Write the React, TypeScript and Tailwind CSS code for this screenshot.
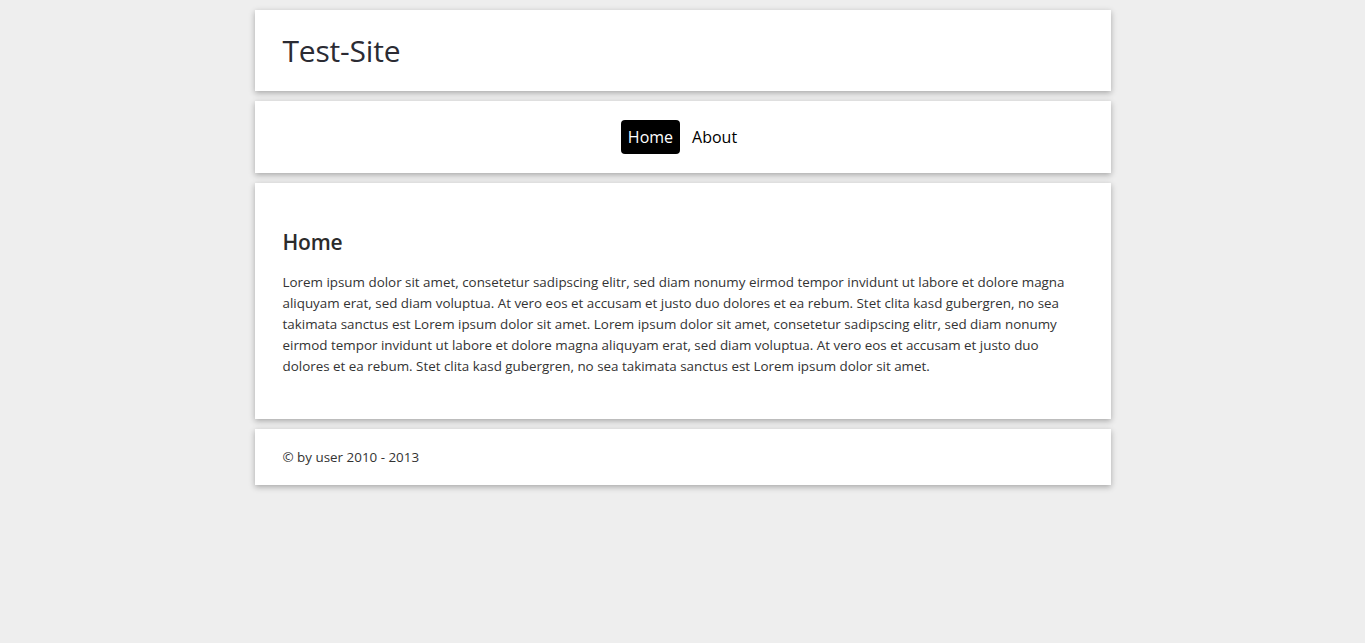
const Box = ({ className = '', children }: { className?: string; children: React.ReactNode }) => (
    <div className={`bg-white shadow-[0_2px_6px_rgba(0,0,0,0.3)] ${className}`}>{children}</div>
);

const App = () => {
    return (
        <div className="min-h-screen bg-[#eeeeee] pt-[10px] text-[#333333]" style={{ fontFamily: '"Open Sans", "Noto Sans", sans-serif' }}>
            <div className="w-[856px] mx-auto flex flex-col gap-[10px]">
                {/* header */}
                <Box className="h-[81px] flex items-center px-[28px]">
                    <h1 className="text-[30px] leading-none font-medium text-[#2b2b33] tracking-[-0.2px]">Test-Site</h1>
                </Box>

                {/* nav */}
                <Box className="h-[72px] flex items-center justify-center">
                    <ul className="flex items-center gap-[5px] text-[16px]">
                        <li>
                            <a href="#" className="block bg-black text-white rounded-[4px] px-[7px] h-[34px] leading-[34px]">Home</a>
                        </li>
                        <li>
                            <a href="#" className="block text-black px-[7px] h-[34px] leading-[34px]">About</a>
                        </li>
                    </ul>
                </Box>

                {/* content */}
                <Box className="h-[236px] px-[28px] pt-[45px]">
                    <h2 className="text-[21px] font-semibold leading-[28px] text-[#2b2b2b] tracking-[-0.2px]">Home</h2>
                    <p className="mt-[16px] text-[13.4px] leading-[21px]">
                        Lorem ipsum dolor sit amet, consetetur sadipscing elitr, sed diam nonumy eirmod tempor invidunt ut labore et dolore magna aliquyam erat, sed diam voluptua. At vero eos et accusam et justo duo dolores et ea rebum. Stet clita kasd gubergren, no sea takimata sanctus est Lorem ipsum dolor sit amet. Lorem ipsum dolor sit amet, consetetur sadipscing elitr, sed diam nonumy eirmod tempor invidunt ut labore et dolore magna aliquyam erat, sed diam voluptua. At vero eos et accusam et justo duo dolores et ea rebum. Stet clita kasd gubergren, no sea takimata sanctus est Lorem ipsum dolor sit amet.
                    </p>
                </Box>

                {/* footer */}
                <Box className="h-[56px] flex items-center px-[28px]">
                    <span className="text-[13.4px]">© by user 2010 - 2013</span>
                </Box>
            </div>
        </div>
    );
};

export default App;
